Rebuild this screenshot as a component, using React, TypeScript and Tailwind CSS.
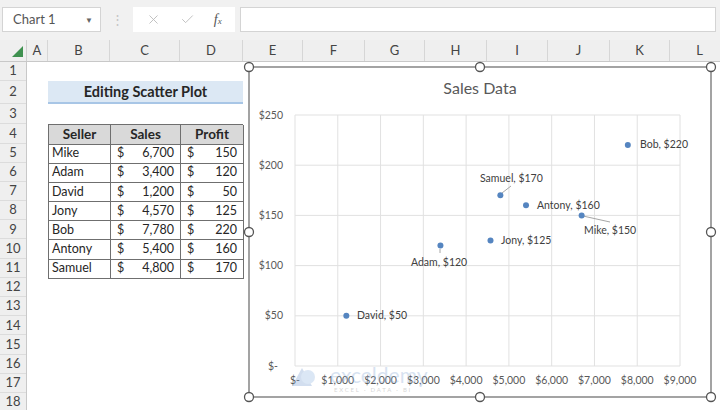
import React from 'react';
import { X, Check } from 'lucide-react';

type Col = { name: string; cls: string };

const columns: Col[] = [
  { name: 'A', cls: 'w-[21px]' },
  { name: 'B', cls: 'w-[62px]' },
  { name: 'C', cls: 'w-[70px]' },
  { name: 'D', cls: 'w-[63px]' },
  { name: 'E', cls: 'w-[60px]' },
  { name: 'F', cls: 'w-[62px]' },
  { name: 'G', cls: 'w-[60px]' },
  { name: 'H', cls: 'w-[62px]' },
  { name: 'I', cls: 'w-[61px]' },
  { name: 'J', cls: 'w-[62px]' },
  { name: 'K', cls: 'w-[60px]' },
  { name: 'L', cls: 'w-[60px]' },
];

// row heights in the sheet, row 2 is the taller title row
const rowHeights = [
  'h-[19px]', 'h-[23px]', 'h-[20px]', 'h-[19.5px]',
  'h-[19.2px]', 'h-[19.2px]', 'h-[19.2px]', 'h-[19.2px]', 'h-[19.2px]', 'h-[19.2px]', 'h-[19.2px]',
  'h-[19.2px]', 'h-[19.2px]', 'h-[19.2px]', 'h-[19.2px]', 'h-[19.2px]', 'h-[19.2px]', 'h-[19.2px]',
];

const sellers = [
  { name: 'Mike', sales: 6700, profit: 150 },
  { name: 'Adam', sales: 3400, profit: 120 },
  { name: 'David', sales: 1200, profit: 50 },
  { name: 'Jony', sales: 4570, profit: 125 },
  { name: 'Bob', sales: 7780, profit: 220 },
  { name: 'Antony', sales: 5400, profit: 160 },
  { name: 'Samuel', sales: 4800, profit: 170 },
];

const fmt = (n: number) => n.toLocaleString('en-US');

// chart geometry (inside the chart frame)
const X0 = 45;
const XS = 42.78 / 1000;
const Y0 = 298;
const YS = 50.2 / 50;
const px = (s: number) => X0 + s * XS;
const py = (p: number) => Y0 - p * YS;

const labels: Record<string, { x: number; y: number; leader?: [number, number, number, number] }> = {
  Bob: { x: 390, y: 80 },
  Samuel: { x: 230, y: 114, leader: [252, 125, 261, 118] },
  Antony: { x: 287, y: 141 },
  Mike: { x: 334, y: 166, leader: [333, 148, 360, 154] },
  Jony: { x: 251, y: 176 },
  Adam: { x: 161, y: 198, leader: [190, 181, 190, 185] },
  David: { x: 107, y: 251 },
};

const yTicks = [0, 50, 100, 150, 200, 250];
const xTicks = [0, 1000, 2000, 3000, 4000, 5000, 6000, 7000, 8000, 9000];

const handles: [number, number][] = [
  [-1, -1], [230, -1], [461, -1],
  [-1, 164], [461, 164],
  [-1, 329], [230, 329], [461, 329],
];

function FormulaBar() {
  return (
    <div className="h-[40px] bg-[#f1f1f1] flex items-start pt-[7px] pl-[2px]">
      <div className="w-[99px] h-[25px] bg-white border border-[#d4d4d4] flex items-center justify-between pl-[10px] pr-[7px] text-[13px] text-[#555]">
        <span>Chart 1</span>
        <span className="text-[8px] text-[#666]">▼</span>
      </div>
      <div className="w-[32px] h-[25px] flex items-center justify-center text-[#c4c4c4] text-[13px]">⋮</div>
      <div className="w-[102px] h-[25px] bg-white flex items-center justify-around px-[4px]">
        <X size={15} strokeWidth={1.4} className="text-[#b9b9b9]" />
        <Check size={15} strokeWidth={1.4} className="text-[#b9b9b9]" />
        <span className="font-['Liberation_Serif'] italic text-[14px] text-[#555] leading-none">
          f<span className="text-[9px]">x</span>
        </span>
      </div>
      <div className="ml-[5px] w-[476px] h-[25px] bg-white border border-[#d4d4d4]" />
    </div>
  );
}

function ColumnHeader() {
  return (
    <div className="h-[22px] flex bg-[#efefef] border-b border-[#c8c8c8]">
      <div className="w-[27px] shrink-0 relative border-r border-[#d0d0d0]">
        <svg className="absolute right-[3px] bottom-[4px]" width="11" height="11" viewBox="0 0 11 11">
          <polygon points="11,0 11,11 0,11" fill="#3f9150" />
        </svg>
      </div>
      {columns.map((c) => (
        <div
          key={c.name}
          className={`${c.cls} shrink-0 flex items-center justify-center border-r border-[#d6d6d6] text-[13px] text-[#444]`}
        >
          {c.name}
        </div>
      ))}
    </div>
  );
}

function SalesTable() {
  return (
    <div className="ml-[21px] w-[195px] grid grid-cols-[62px_70px_63px] border-l border-t border-[#6f6f6f] text-[12.5px] text-[#262626]">
      {['Seller', 'Sales', 'Profit'].map((h) => (
        <div
          key={h}
          className="h-[19.5px] bg-[#d9d9d9] border-r border-b border-[#6f6f6f] flex items-center justify-center font-bold text-[13.5px]"
        >
          {h}
        </div>
      ))}
      {sellers.map((s) => (
        <React.Fragment key={s.name}>
          <div className="h-[19.2px] border-r border-b border-[#6f6f6f] flex items-center pl-[3px]">{s.name}</div>
          <div className="h-[19.2px] border-r border-b border-[#6f6f6f] flex items-center justify-between pl-[6px] pr-[6px]">
            <span>$</span>
            <span>{fmt(s.sales)}</span>
          </div>
          <div className="h-[19.2px] border-r border-b border-[#6f6f6f] flex items-center justify-between pl-[6px] pr-[6px]">
            <span>$</span>
            <span>{s.profit}</span>
          </div>
        </React.Fragment>
      ))}
    </div>
  );
}

function ScatterChart() {
  return (
    <div className="absolute left-[248px] top-[66px] w-[464px] h-[332px] border-2 border-[#a3a3a3] bg-white">
      <svg width="460" height="328" className="overflow-visible font-['Lato']">
        <text x="230" y="26" textAnchor="middle" fontSize="16" fill="#595959">
          Sales Data
        </text>

        {/* gridlines */}
        {xTicks.map((t) => (
          <line key={`v${t}`} x1={px(t)} x2={px(t)} y1={py(250)} y2={py(0)} stroke="#e1e1e1" strokeWidth="1" />
        ))}
        {yTicks.map((t) => (
          <line key={`h${t}`} x1={px(0)} x2={px(9000)} y1={py(t)} y2={py(t)} stroke="#e1e1e1" strokeWidth="1" />
        ))}

        {/* axis labels */}
        {yTicks.map((t) => (
          <text key={`yl${t}`} x={t === 0 ? 28 : 33} y={py(t) + 3.5} textAnchor="end" fontSize="10.5" fill="#595959">
            {t === 0 ? '$-' : `$${t}`}
          </text>
        ))}
        {xTicks.map((t) => (
          <text key={`xl${t}`} x={px(t)} y="316" textAnchor="middle" fontSize="10.5" fill="#595959">
            {t === 0 ? '$-' : `$${fmt(t)}`}
          </text>
        ))}

        {/* points and data labels */}
        {sellers.map((s) => {
          const l = labels[s.name];
          return (
            <g key={s.name}>
              {l.leader && (
                <line x1={l.leader[0]} y1={l.leader[1]} x2={l.leader[2]} y2={l.leader[3]} stroke="#a6a6a6" strokeWidth="1" />
              )}
              <circle cx={px(s.sales)} cy={py(s.profit)} r="3" fill="#5585c0" />
              <text x={l.x} y={l.y} fontSize="10.5" fill="#404040">
                {`${s.name},  $${s.profit}`}
              </text>
            </g>
          );
        })}

        {/* exceldemy watermark */}
        <g opacity="0.35">
          <path d="M42 318 L52 300 L62 318 Z" fill="#7fa3d3" />
          <circle cx="58" cy="309" r="7" fill="#9bbbe3" />
          <text x="80" y="315" fontSize="21" fill="#8eaed8">
            exceldemy
          </text>
          <text x="84" y="324" fontSize="6" letterSpacing="1.8" fill="#8a8a8a">
            EXCEL · DATA · BI
          </text>
        </g>

        {/* selection handles */}
        {handles.map(([x, y], i) => (
          <circle key={i} cx={x} cy={y} r="4.5" fill="#fff" stroke="#555" strokeWidth="1.3" />
        ))}
      </svg>
    </div>
  );
}

export default function App() {
  return (
    <div className="w-[720px] h-[410px] overflow-hidden bg-white relative font-['Lato',sans-serif]">
      <FormulaBar />
      <ColumnHeader />
      <div className="flex">
        <div className="w-[27px] shrink-0 bg-[#efefef] border-r border-[#c8c8c8]">
          {rowHeights.map((h, i) => (
            <div key={i} className={`${h} flex items-center justify-center border-b border-[#dcdcdc] text-[13px] text-[#444]`}>
              {i + 1}
            </div>
          ))}
        </div>
        <div className="flex-1 flex flex-col">
          <div className="h-[19px]" />
          <div className="ml-[21px] w-[195px] h-[23px] bg-[#dce8f4] border-b-2 border-[#a8c6e6] flex items-center justify-center font-bold text-[14.5px] text-[#262626]">
            Editing Scatter Plot
          </div>
          <div className="h-[20px]" />
          <SalesTable />
        </div>
      </div>
      <ScatterChart />
    </div>
  );
}
